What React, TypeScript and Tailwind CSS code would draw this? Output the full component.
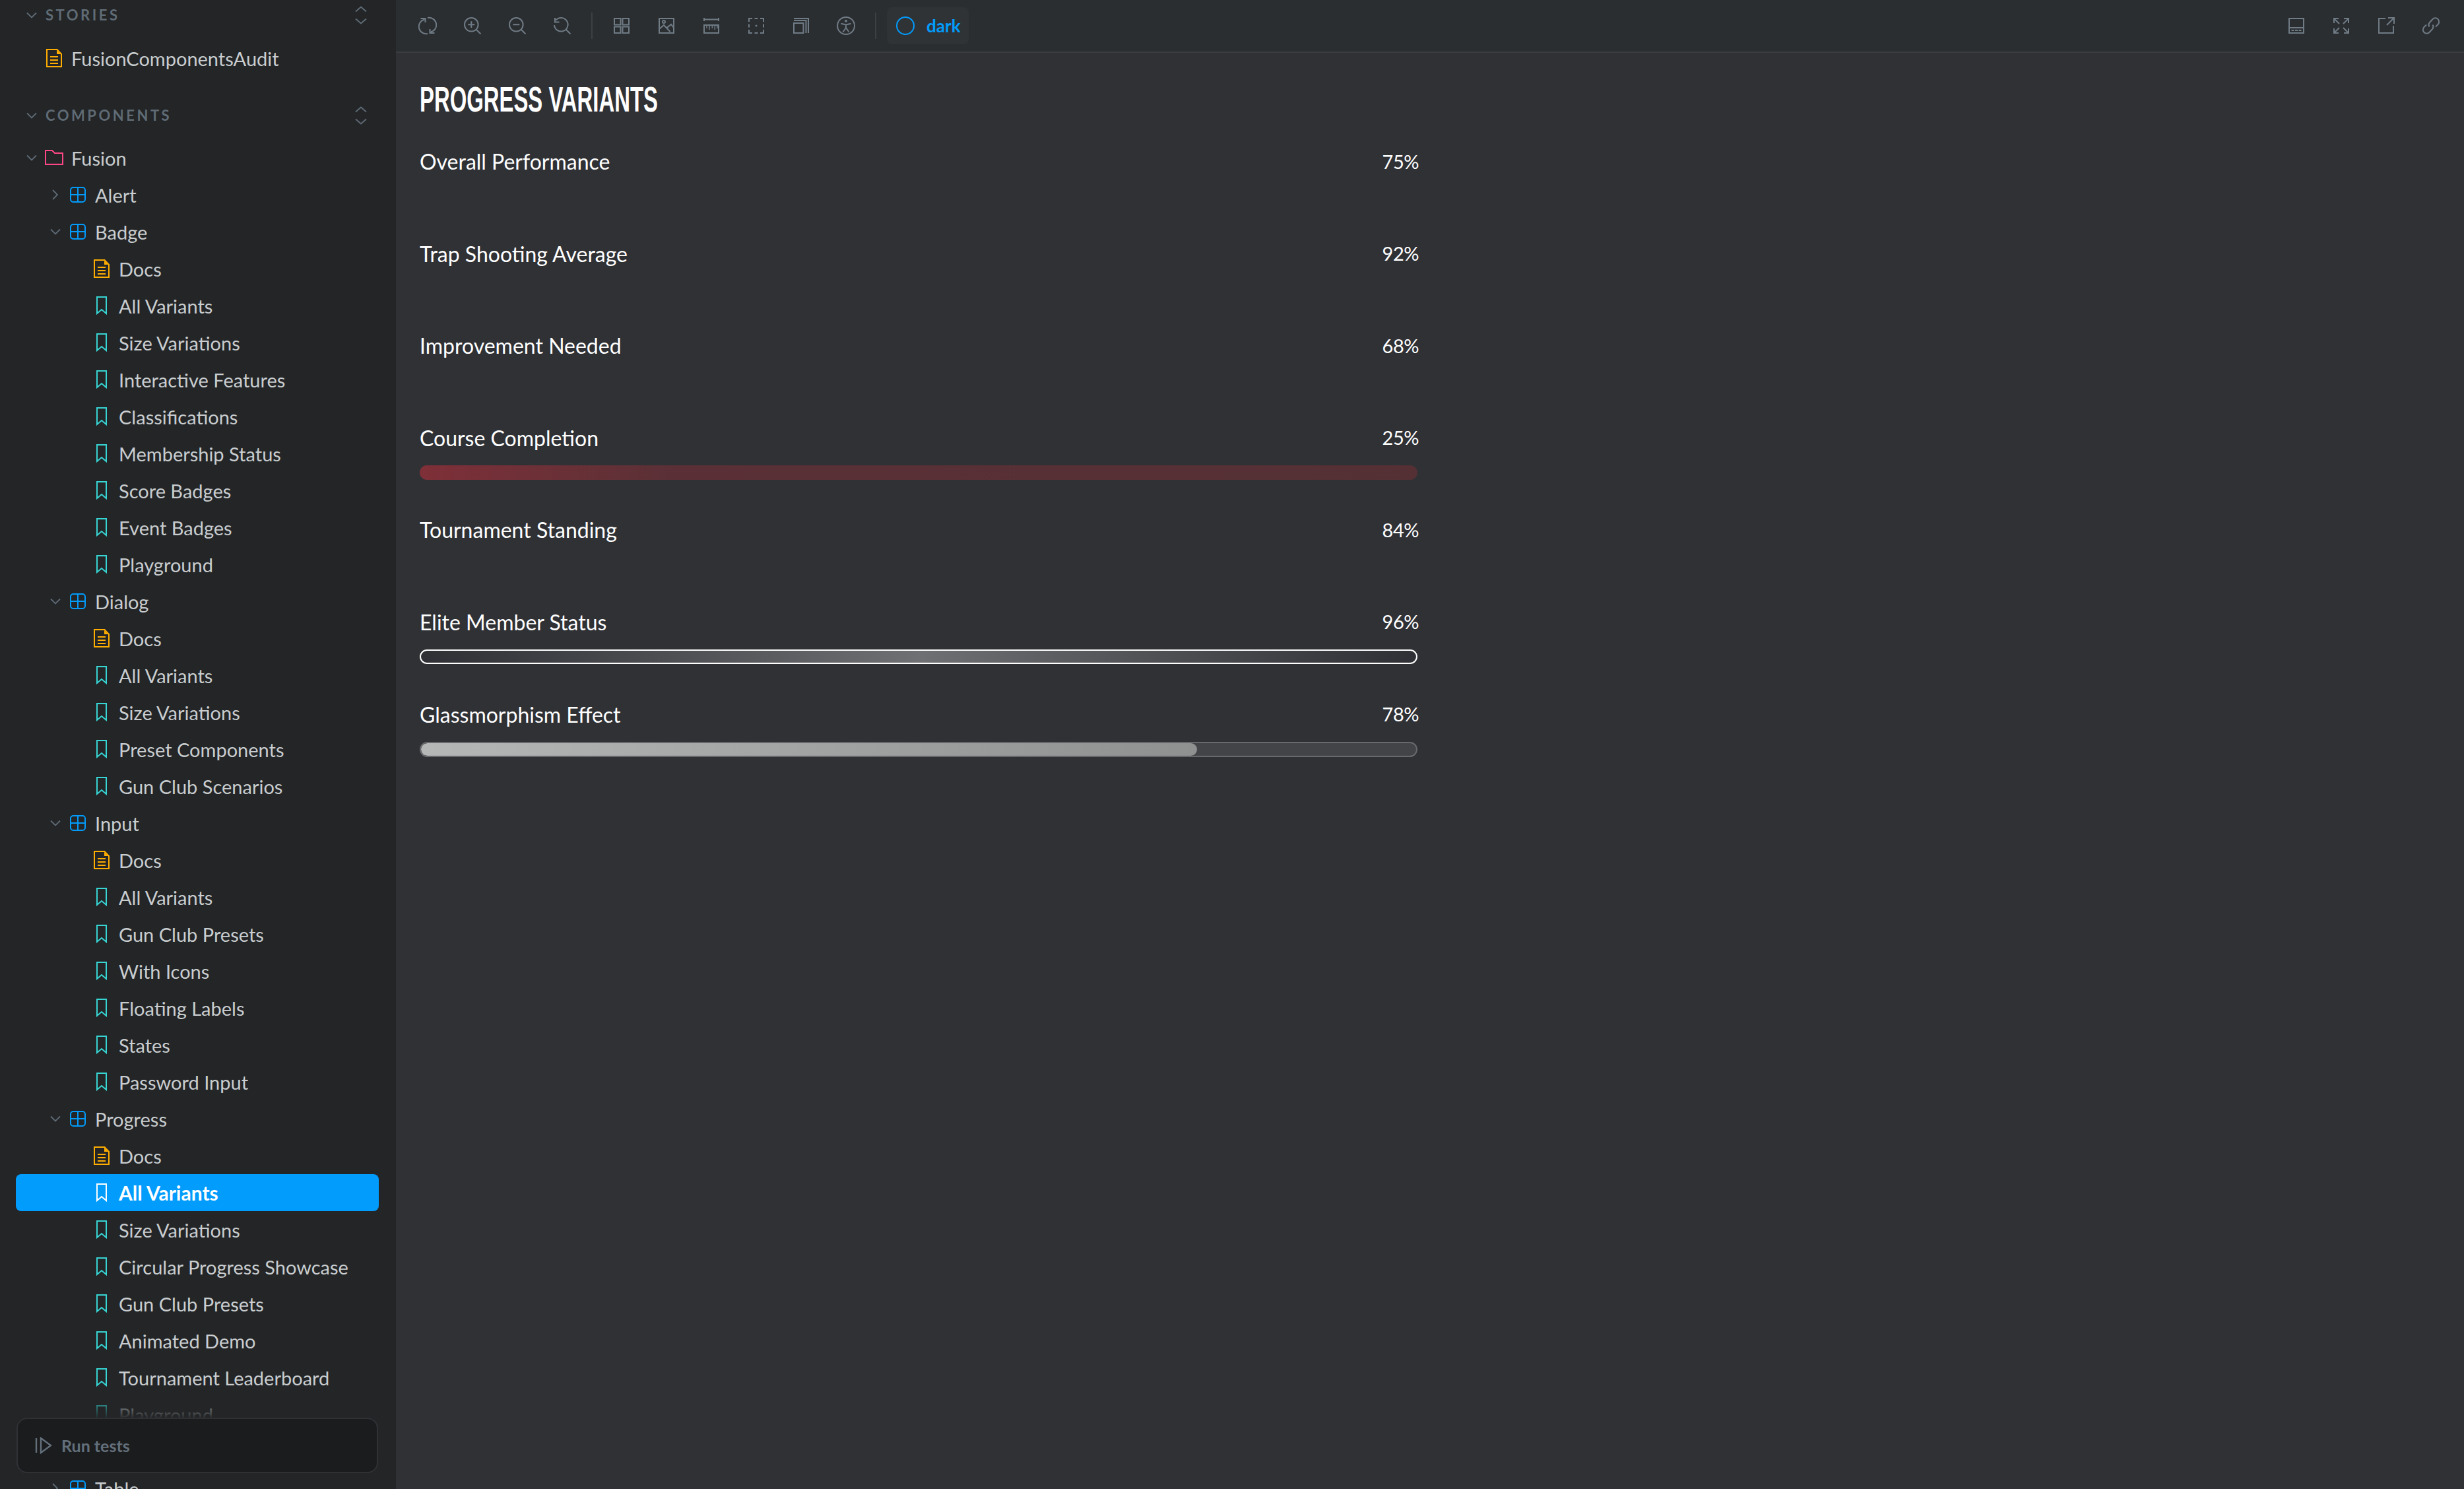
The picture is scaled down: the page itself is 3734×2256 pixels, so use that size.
import React from "react";

const font = "[font-family:'Lato','Noto_Sans',sans-serif]";

function Chevron({ open, className = "" }: { open: boolean; className?: string }) {
  return (
    <svg viewBox="0 0 16 16" className={`w-4 h-4 shrink-0 ${className}`} fill="none" stroke="#5f6b75" strokeWidth="1.8">
      {open ? <path d="M1 4.5 8 11.5l7-7" /> : <path d="M4 1l7 7-7 7" />}
    </svg>
  );
}
function Expand() {
  return (
    <svg viewBox="0 0 18 28" className="w-[18px] h-[28px]" fill="none" stroke="#5f6b75" strokeWidth="2">
      <path d="M1 8.5 9 1.5l8 7M1 19.5l8 7 8-7" />
    </svg>
  );
}
function DocIcon() {
  return (
    <svg viewBox="0 0 24 28" className="w-6 h-7 shrink-0" fill="none" stroke="#ffae00" strokeWidth="2">
      <path d="M1 1h15.5L23 8v19H1z" />
      <path d="M6 12h12M6 17h12M6 22h12" />
      <path d="M16 2v6h6z" fill="#ffae00" stroke="none" />
    </svg>
  );
}
function BookmarkIcon({ color = "#37d5d3" }: { color?: string }) {
  return (
    <svg viewBox="0 0 24 28" className="w-6 h-7 shrink-0" fill="none" stroke={color} strokeWidth="2">
      <path d="M5 1h14v25l-7-6-7 6z" />
    </svg>
  );
}
function ComponentIcon() {
  return (
    <svg viewBox="0 0 24 24" className="w-6 h-6 shrink-0" fill="none" stroke="#029cfd" strokeWidth="2">
      <rect x="1" y="1" width="22" height="22" rx="4" />
      <path d="M12 1v22M1 12h22" />
    </svg>
  );
}
function FolderIcon() {
  return (
    <svg viewBox="0 0 28 24" className="w-7 h-6 shrink-0" fill="none" stroke="#ff4785" strokeWidth="2">
      <path d="M1 1h10l4 4h12v17H1z" />
    </svg>
  );
}

type Row = { t: "folder" | "comp" | "doc" | "story"; label: string; open?: boolean; active?: boolean };
const rows: Row[] = [
  { t: "folder", label: "Fusion", open: true },
  { t: "comp", label: "Alert", open: false },
  { t: "comp", label: "Badge", open: true },
  ...["Docs", "All Variants", "Size Variations", "Interactive Features", "Classifications", "Membership Status", "Score Badges", "Event Badges", "Playground"].map((label): Row => ({ t: label === "Docs" ? "doc" : "story", label })),
  { t: "comp", label: "Dialog", open: true },
  ...["Docs", "All Variants", "Size Variations", "Preset Components", "Gun Club Scenarios"].map((label): Row => ({ t: label === "Docs" ? "doc" : "story", label })),
  { t: "comp", label: "Input", open: true },
  ...["Docs", "All Variants", "Gun Club Presets", "With Icons", "Floating Labels", "States", "Password Input"].map((label): Row => ({ t: label === "Docs" ? "doc" : "story", label })),
  { t: "comp", label: "Progress", open: true },
  { t: "doc", label: "Docs" },
  { t: "story", label: "All Variants", active: true },
  ...["Size Variations", "Circular Progress Showcase", "Gun Club Presets", "Animated Demo", "Tournament Leaderboard", "Playground"].map((label): Row => ({ t: "story", label })),
  { t: "comp", label: "Table", open: false },
];

function TreeRow({ r, extra }: { r: Row; extra?: boolean }) {
  const pad = r.t === "folder" ? "pl-[16px]" : r.t === "comp" ? "pl-[52px]" : "pl-[118px]";
  return (
    <div className={`flex items-center h-14 rounded-lg ${extra ? "mt-14" : ""} ${pad} ${r.active ? "bg-[#029cfd] text-white font-bold" : "text-[#c9cdcf]"}`}>
      {r.t === "folder" && <Chevron open={!!r.open} className="mr-[12px]" />}
      {r.t === "comp" && <Chevron open={!!r.open} className="mr-[14px]" />}
      {r.t === "folder" && <FolderIcon />}
      {r.t === "comp" && <ComponentIcon />}
      {r.t === "doc" && <DocIcon />}
      {r.t === "story" && <BookmarkIcon color={r.active ? "#ffffff" : "#37d5d3"} />}
      <span className={`${r.t === "folder" ? "ml-[12px]" : "ml-[14px]"} ${r.active ? "text-[30px]" : "text-[29px]"} leading-none`}>{r.label}</span>
    </div>
  );
}

function I({ children }: { children: React.ReactNode }) {
  return (
    <svg viewBox="0 0 28 28" width={28} height={28} fill="none" stroke="#6f7b85" strokeWidth="2">
      {children}
    </svg>
  );
}

const leftIcons = [
  <I><path d="M9.5 4.5A10.5 10.5 0 0 0 14 26" /><path d="M3.5 3h7v6" /><path d="M18.5 23.5A10.5 10.5 0 0 0 14 2" /><path d="M24.5 25h-7v-6" /></I>,
  <I><circle cx="12.3" cy="12.3" r="10.3" /><path d="M12.3 7.3v10M7.3 12.3h10M19.5 19.5l7 7" /></I>,
  <I><circle cx="12.3" cy="12.3" r="10.3" /><path d="M7.3 12.3h10M19.5 19.5l7 7" /></I>,
  <I><path d="M4.5 5.5A10.3 10.3 0 1 1 2 13M3 2v6.5h6.5M19.5 19.5l7 7" /></I>,
];
const midIcons = [
  <I><path d="M3 3h9.5v9.5H3zM15.5 3H25v9.5h-9.5zM3 15.5h9.5V25H3zM15.5 15.5H25V25h-9.5z" /></I>,
  <I><path d="M3 3h22v22H3z" /><circle cx="10" cy="8" r="2" /><path d="M3 19l7-6 9.5 10M14 17.5l7-5.5 4 5" /></I>,
  <I><path d="M3 4.5h22M3 2v5M25 2v5M3 13h22v12H3z" /><path d="M7 13v5M11 13v7M15.3 13v5M19.3 13v7M23 13v5" strokeWidth="1.5" /></I>,
  <I><path d="M3 8V3h5M20 3h5v5M25 20v5h-5M8 25H3v-5M3 11.5v5M25 11.5v5M11.5 3h5M11.5 25h5" /><circle cx="14" cy="14" r="1.5" fill="#6f7b85" stroke="none" /></I>,
  <I><path d="M3 10h14.5v15H3zM3 6h18.5v19M3 3h22v22" /></I>,
  <I><circle cx="14" cy="14" r="13" /><circle cx="14" cy="6.7" r="2" fill="#6f7b85" stroke="none" /><path d="M6.5 10.7 14 12.5l7.500-1.800M14 12.5v5M14 17l-4.500 6.500M14 17l4.500 6.500" /></I>,
];
const rightIcons = [
  <I><path d="M3 3h22v22H3zM3 17h22M6.5 21h4M12 21h4M17.5 21h4" /></I>,
  <I><path d="M3 10V3h7M3 3l8 8M25 10V3h-7M25 3l-8 8M3 18v7h7M3 25l8-8M25 18v7h-7M25 25l-8-8" /></I>,
  <I><path d="M13 3H3v22h22V14M17 2h9v9M26 2 15 13" /></I>,
  <I><path d="M11.5 15.5a5 5 0 0 1 0-6l5-5.500a5.600 5.600 0 0 1 8 8l-3.500 3.500" /><path d="M16.500 12.500a5 5 0 0 1 0 6l-5 5.500a5.600 5.600 0 0 1-8-8l3.500-3.500" /></I>,
];

const bars = [
  { label: "Overall Performance", pct: "75%", bar: null },
  { label: "Trap Shooting Average", pct: "92%", bar: null },
  { label: "Improvement Needed", pct: "68%", bar: null },
  { label: "Course Completion", pct: "25%", bar: "red" },
  { label: "Tournament Standing", pct: "84%", bar: null },
  { label: "Elite Member Status", pct: "96%", bar: "elite" },
  { label: "Glassmorphism Effect", pct: "78%", bar: "glass" },
];

function Bar({ kind }: { kind: string | null }) {
  if (kind === "red")
    return <div className="h-[22px] rounded-full bg-gradient-to-r from-[#7f2f38] via-[#5a3036] via-25% to-[#543035]" />;
  if (kind === "elite")
    return <div className="h-[22px] rounded-full border-2 border-white bg-gradient-to-r from-[#2f3035] via-[#6f7073] to-[#2f3035]" />;
  if (kind === "glass")
    return (
      <div className="h-[23px] rounded-full border-2 border-[#68696d] bg-[#434447] overflow-hidden">
        <div className="h-full w-[78%] rounded-full bg-gradient-to-r from-[#b5b6b6] to-[#8f9090]" />
      </div>
    );
  return <div className="h-[22px]" />;
}

export default function App() {
  return (
    <div className={`flex h-[2256px] w-[3734px] overflow-hidden ${font} bg-[#2f3135]`}>
      <aside className="relative w-[600px] shrink-0 bg-[#232527] overflow-hidden pl-6 pr-[26px]">
        <div className="flex items-center h-[46px] pl-[16px] pr-[18px] text-[#5f6b75]">
          <Chevron open={true} className="mr-[13px]" />
          <span className="text-[22px] font-bold tracking-[0.16em] leading-none flex-1">STORIES</span>
          <Expand />
        </div>
        <div className="flex items-center h-14 mt-[14px] pl-[46px]">
          <DocIcon />
          <span className="ml-[14px] text-[29px] leading-none text-[#c9cdcf]">FusionComponentsAudit</span>
        </div>
        <div className="flex items-center h-[46px] mt-[36px] pl-[16px] pr-[18px] text-[#5f6b75]">
          <Chevron open={true} className="mr-[13px]" />
          <span className="text-[22px] font-bold tracking-[0.16em] leading-none flex-1">COMPONENTS</span>
          <Expand />
        </div>
        <div className="mt-[13px]">
          {rows.map((r, i) => (
            <TreeRow key={i} r={r} extra={r.label === "Table"} />
          ))}
        </div>
        <div className="absolute left-0 right-0 top-[2110px] h-[40px] bg-gradient-to-b from-transparent to-[#232527]" />
        <div className="absolute left-[25px] w-[548px] top-[2148px] h-[84px] rounded-2xl border-2 border-[#2f3135] bg-[#1b1c1e] flex items-center pl-[26px] text-[#63707b]">
          <svg viewBox="0 0 26 26" className="w-[26px] h-[26px]" fill="none" stroke="#63707b" strokeWidth="2.4">
            <path d="M2 2v22M9 2l15 11-15 11z" />
          </svg>
          <span className="ml-[14px] text-[25px] font-bold leading-none">Run tests</span>
        </div>
      </aside>
      <main className="flex-1 flex flex-col min-w-0">
        <header className="h-20 shrink-0 bg-[#2b2e31] border-b-2 border-[#3b3d40] flex items-center pl-[34px] pr-[36px]">
          <div className="flex items-center gap-[40px]">{leftIcons.map((x, i) => <span key={i} className="flex">{x}</span>)}</div>
          <div className="w-[2px] h-10 bg-[#3d4043] mx-[30px]" />
          <div className="flex items-center gap-[40px]">{midIcons.map((x, i) => <span key={i} className="flex">{x}</span>)}</div>
          <div className="w-[2px] h-10 bg-[#3d4043] ml-[30px] mr-[16px]" />
          <div className="flex items-center h-14 w-[124px] rounded-lg bg-[#303336] pl-[14px] text-[#029cfd]">
            <svg viewBox="0 0 28 28" className="w-7 h-7 shrink-0" fill="none" stroke="#029cfd" strokeWidth="2"><circle cx="14" cy="14" r="13" /></svg>
            <span className="ml-[18px] text-[26px] font-bold leading-none">dark</span>
          </div>
          <div className="flex-1" />
          <div className="flex items-center gap-[40px]">{rightIcons.map((x, i) => <span key={i} className="flex">{x}</span>)}</div>
        </header>
        <div className="pl-[36px] w-[1548px] pt-[36px]">
          <h1 className="text-[53px] font-bold leading-[70px] text-white origin-left scale-x-[0.62] whitespace-nowrap font-['Liberation_Sans',sans-serif]">PROGRESS VARIANTS</h1>
          <div className="mt-[35px] flex flex-col">
            {bars.map((b) => (
              <div key={b.label} className="h-[139.6px]">
                <div className="flex justify-between items-center h-12 text-white text-[32px] leading-none">
                  <span>{b.label}</span>
                  <span className="text-[29px] tracking-[-0.5px] -mr-[2px] -mt-[2px]">{b.pct}</span>
                </div>
                <div className="mt-[17px]">
                  <Bar kind={b.bar} />
                </div>
              </div>
            ))}
          </div>
        </div>
      </main>
    </div>
  );
}
